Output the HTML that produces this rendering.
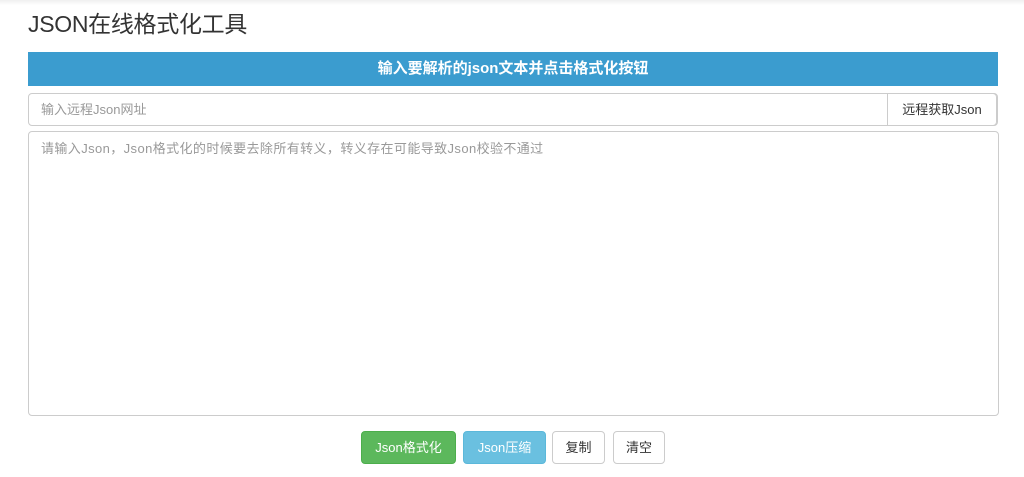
<!DOCTYPE html>
<html><head><meta charset="utf-8"><style>
*{box-sizing:border-box;margin:0;padding:0}
body{width:1024px;height:477px;background:#fff;font-family:"Liberation Sans","Noto Sans CJK SC",sans-serif;position:relative;overflow:hidden}
.top{position:absolute;left:0;top:0;width:1024px;height:5px;background:linear-gradient(#f0f0f0,#fff)}
h1{position:absolute;left:28px;top:9px;font-size:23px;font-weight:normal;color:#333;line-height:30px;letter-spacing:-0.3px}
.bar{position:absolute;left:28px;top:52px;width:970px;height:34px;background:#3b9ccf;color:#fff;font-weight:bold;font-size:15px;text-align:center;line-height:34px}
.inp{position:absolute;left:28px;top:93px;width:970px;height:33px;border:1px solid #ccc;border-radius:4px;font-size:13px;color:#999;line-height:31px;padding-left:12px}
.inp span{position:absolute;right:0;top:-1px;height:33px;width:110px;border:1px solid #ccc;border-radius:0 4px 4px 0;color:#333;text-align:center;line-height:31px;background:#fff}
.ta{position:absolute;left:28px;top:131px;width:971px;height:285px;border:1px solid #ccc;border-radius:4px;font-size:13px;color:#999;padding:8px 12px;line-height:18px;letter-spacing:0.4px}
.b{position:absolute;top:431px;height:33px;border-radius:4px;font-size:13px;line-height:31px;text-align:center;border:1px solid #ccc;color:#333}
</style></head><body>
<div class="top"></div>
<h1>JSON在线格式化工具</h1>
<div class="bar">输入要解析的json文本并点击格式化按钮</div>
<div class="inp">输入远程Json网址<span>远程获取Json</span></div>
<div class="ta">请输入Json，Json格式化的时候要去除所有转义，转义存在可能导致Json校验不通过</div>
<div class="b" style="left:361px;width:95px;background:#5cb85c;border-color:#4cae4c;color:#fff">Json格式化</div>
<div class="b" style="left:463px;width:83px;background:#6ac0e0;border-color:#5bb8da;color:#fff">Json压缩</div>
<div class="b" style="left:552px;width:53px">复制</div>
<div class="b" style="left:613px;width:52px">清空</div>
</body></html>
